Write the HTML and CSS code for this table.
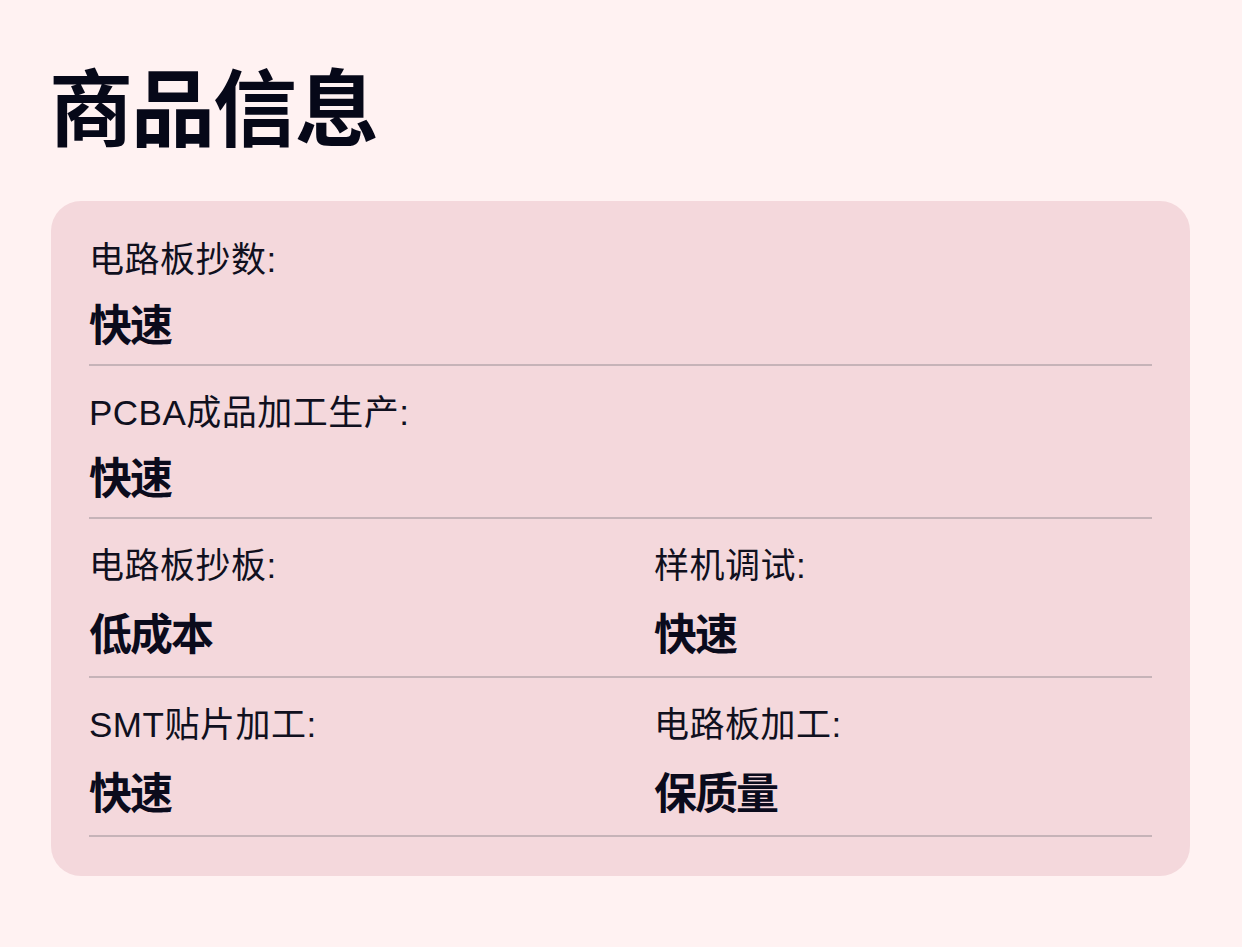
FILE: index.html
```html
<!DOCTYPE html>
<html lang="zh-CN">
<head>
<meta charset="utf-8">
<title>商品信息</title>
<link rel="stylesheet" href="styles.css">
</head>
<body>
<main class="page">
  <h1 class="title">商品信息</h1>
  <section class="card">
    <div class="item item-wide">
      <div class="label">电路板抄数:</div>
      <div class="value">快速</div>
    </div>
    <div class="item item-wide">
      <div class="label">PCBA成品加工生产:</div>
      <div class="value">快速</div>
    </div>
    <div class="item item-half">
      <div class="label">电路板抄板:</div>
      <div class="value">低成本</div>
    </div>
    <div class="item item-half">
      <div class="label">样机调试:</div>
      <div class="value">快速</div>
    </div>
    <div class="item item-half">
      <div class="label">SMT贴片加工:</div>
      <div class="value">快速</div>
    </div>
    <div class="item item-half">
      <div class="label">电路板加工:</div>
      <div class="value">保质量</div>
    </div>
  </section>
</main>
</body>
</html>
```

FILE: styles.css
```css
html, body {
  margin: 0;
  padding: 0;
  background: #fff2f2;
}

body {
  font-family: "Liberation Sans", "Noto Sans CJK SC", sans-serif;
  color: #0b0b1c;
}

.page {
  padding: 56px 52px 40px 49px;
}

.title {
  margin: 0 0 49px 0;
  font-family: "Noto Sans CJK SC", sans-serif;
  font-size: 84px;
  line-height: 96px;
  font-weight: 700;
  letter-spacing: -2px;
  color: #060818;
}

.card {
  margin-left: 2px;
  background: #f4d8dc;
  border-radius: 30px;
  padding: 12px 38px 39px 38px;
  display: grid;
  grid-template-columns: 565px 1fr;
}

.item {
  padding-top: 26px;
  border-bottom: 2px solid #c6b3b8;
}

.item-wide {
  grid-column: 1 / span 2;
  padding-bottom: 18px;
}

.item-half {
  padding-bottom: 21px;
}

.label {
  font-size: 35px;
  line-height: 42px;
  font-weight: 400;
  letter-spacing: 0.5px;
  color: #10101e;
}

.value {
  margin-top: 17px;
  font-family: "Noto Sans CJK SC", sans-serif;
  font-size: 43px;
  line-height: 48px;
  font-weight: 700;
  letter-spacing: -2px;
}

.item-half .value {
  margin-top: 20px;
}
```
